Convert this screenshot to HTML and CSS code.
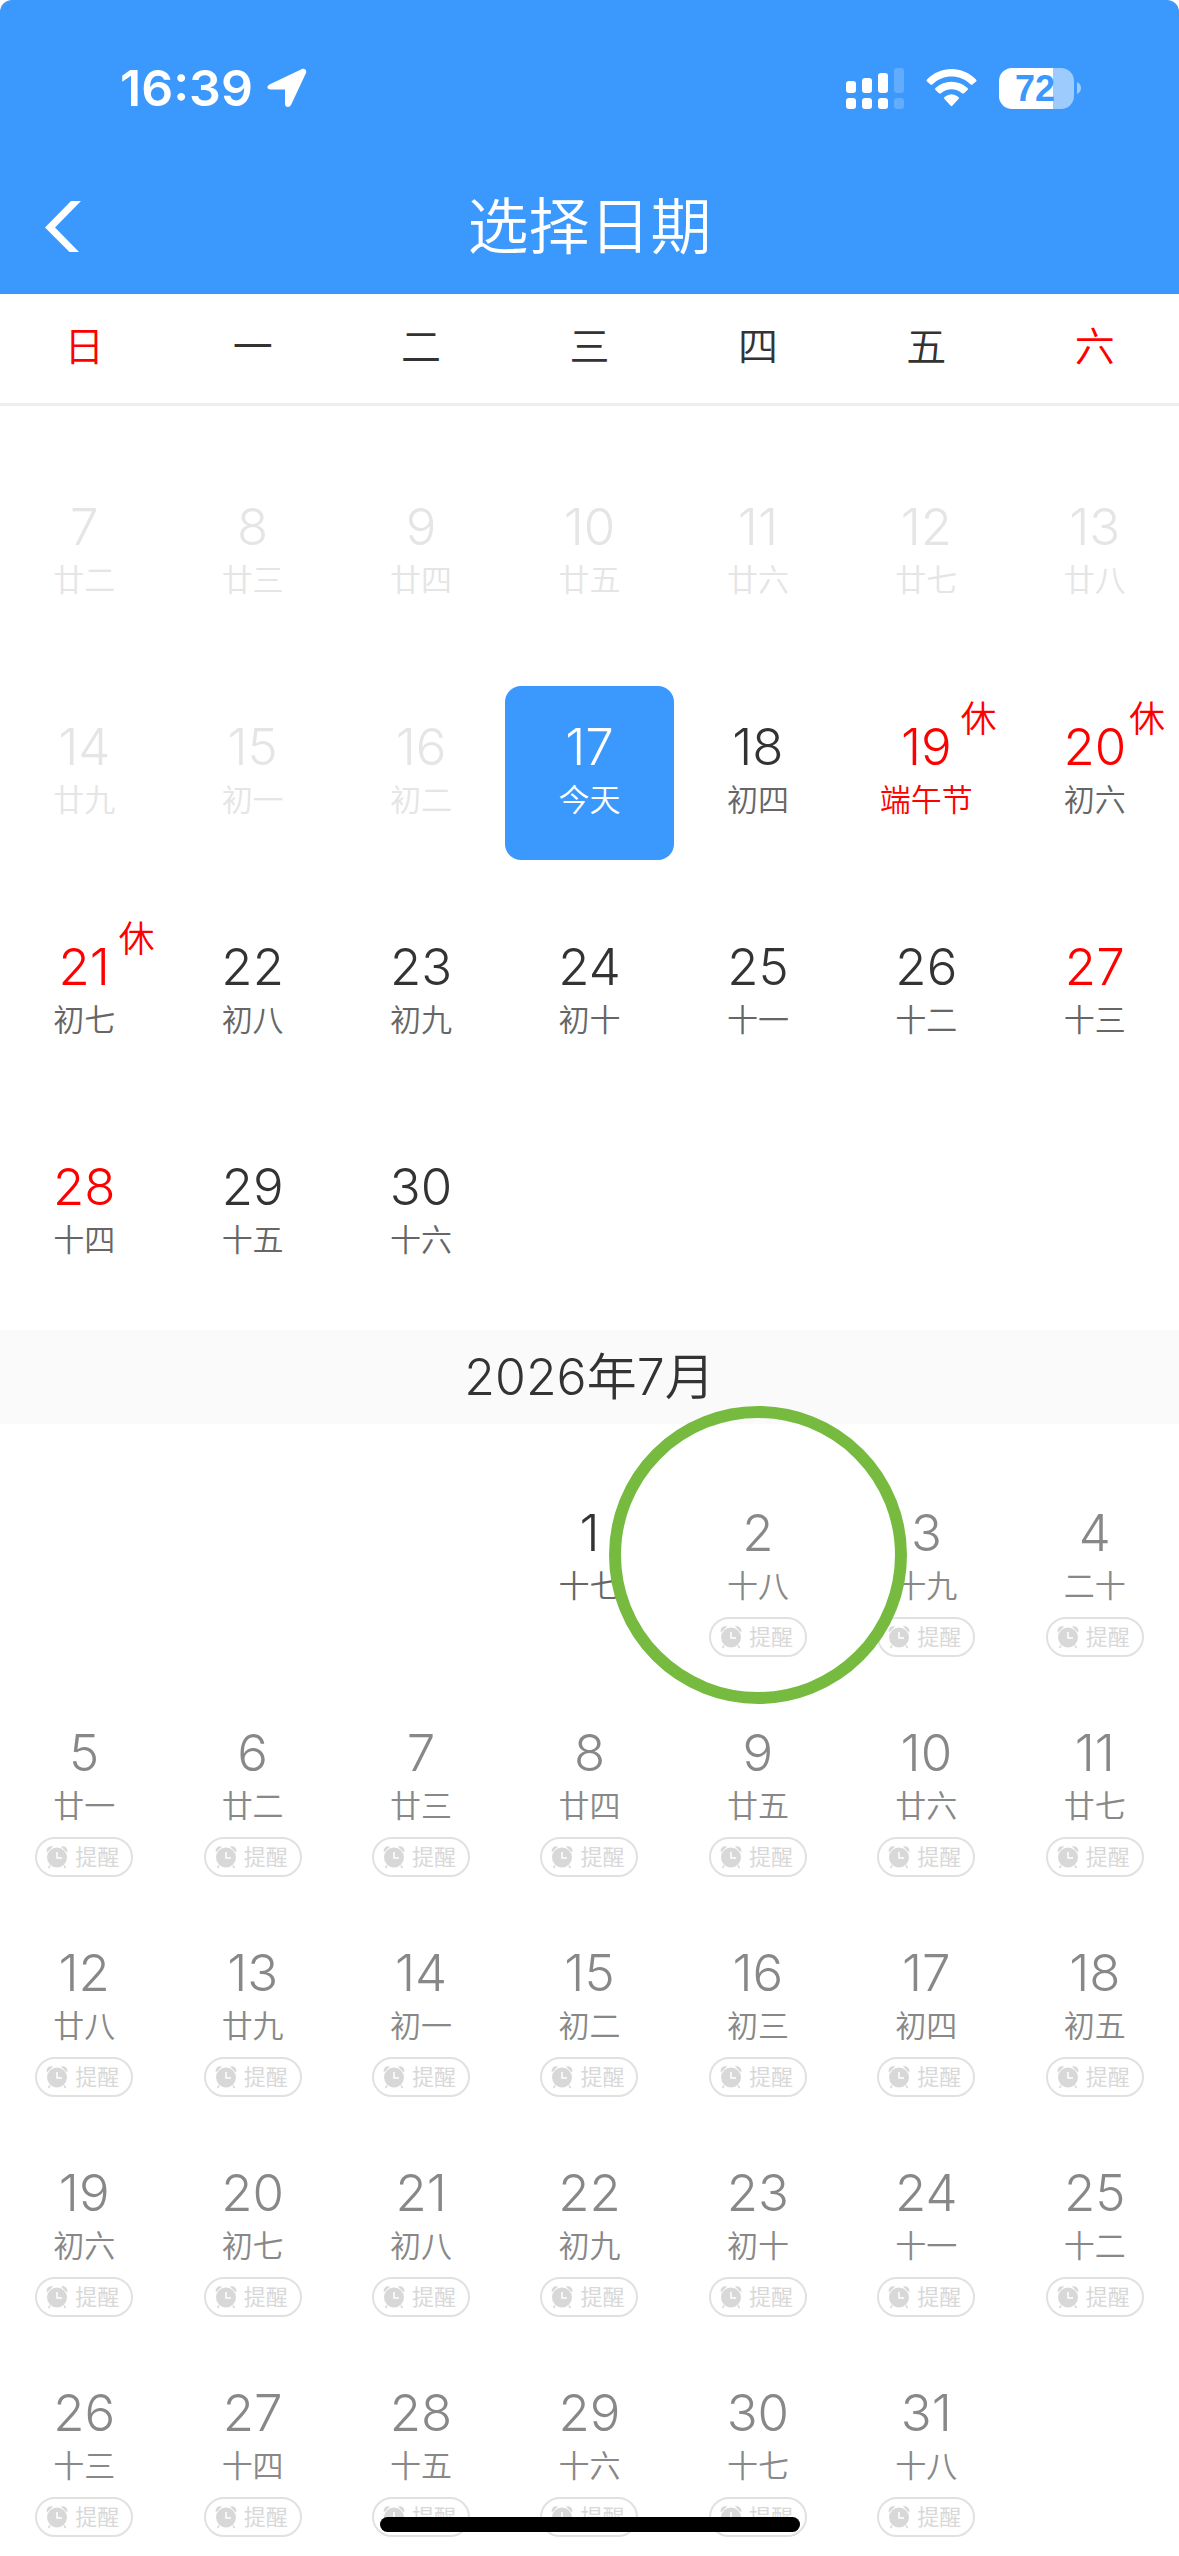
FILE: index.html
```html
<!DOCTYPE html>
<html lang="zh-CN">
<head>
<meta charset="utf-8">
<meta name="viewport" content="width=device-width, initial-scale=1">
<title>选择日期</title>
<link rel="stylesheet" href="styles.css">
</head>
<body>
<svg class="sprite" aria-hidden="true">
  <symbol id="alarm" viewBox="0 0 22 24">
    <path d="M1 7.5C-.5 4 2.500 .5 7 1.500Z M21 7.500C22.500 4 19.500 .5 15 1.500Z"/>
    <path d="M4 20.500L2.500 23M18 20.500L19.500 23" stroke="currentColor" stroke-width="1.500"/>
    <circle cx="11" cy="12.500" r="10"/>
    <path d="M11 7v6h5" fill="none" stroke="#fff" stroke-width="1.500"/>
  </symbol>
</svg>
<header class="top">
  <div class="status">
    <div class="status-left">
      <span class="clock">16:39</span>
      <svg class="locate" viewBox="0 0 40 40" aria-hidden="true"><path d="M3 16.200L34.500 1.200C37.500 0 40 2 39 5L24 37C22.500 40 18 39.500 18 36V21.500H3.500C0 21.500-1 18 3 16.200Z" fill="#fff"/></svg>
    </div>
    <div class="status-right">
      <svg class="signal" viewBox="0 0 58 41" fill="#fff" aria-hidden="true">
        <rect x="0" y="13" width="10" height="12" rx="3"/><rect x="16" y="10" width="10" height="15" rx="3"/><rect x="32" y="5" width="10" height="20" rx="3"/><rect x="48" y="0" width="10" height="25" rx="3" opacity=".2"/>
        <rect x="0" y="30" width="10" height="11" rx="3"/><rect x="16" y="30" width="10" height="11" rx="3"/><rect x="32" y="30" width="10" height="11" rx="3"/><rect x="48" y="30" width="10" height="11" rx="3" opacity=".2"/>
      </svg>
      <svg class="wifi" viewBox="0 0 50 38" fill="#fff" aria-hidden="true">
        <path d="M.5 10.500C14-3.500 36-3.500 49.500 10.500Q50.500 11.500 49.500 12.500L46 15.500Q45 16.200 44 15.300C33 5 17 5 6 15.300Q5 16.200 4 15.500L.5 12.500Q-.5 11.500 .5 10.500Z"/>
        <path d="M9 19C18 10.500 32 10.500 41 19Q42 20 41 21L37.500 24.200Q36.500 25 35.500 24.200C29.500 19 20.500 19 14.500 24.200Q13.500 25 12.500 24.200L9 21Q8 20 9 19Z"/>
        <path d="M18 28Q25 22.500 32 28Q33 29 32 30L25.800 36.800Q25 37.500 24.200 36.800L18 30Q17 29 18 28Z"/>
      </svg>
      <div class="battery"><span class="battery-body">72</span><svg class="battery-tip" viewBox="0 0 4 12" aria-hidden="true"><path d="M0 0Q4 2 4 6T0 12Z" fill="#fff" opacity=".5"/></svg></div>
    </div>
  </div>
  <div class="nav">
    <button class="back" aria-label="返回"><svg viewBox="0 0 36 51" aria-hidden="true"><path d="M26 0H36L10 26.500L34 51H24.500L0 26.500Z" fill="#fff"/></svg></button>
    <h1 class="title">选择日期</h1>
  </div>
</header>
<div class="weekdays">
  <span class="weekend">日</span><span>一</span><span>二</span><span>三</span><span>四</span><span>五</span><span class="weekend">六</span>
</div>
<main id="calendar"></main>
<div class="home"></div>
<script src="calendar.js"></script>
</body>
</html>
```
FILE: styles.css
```css
* { box-sizing: border-box; }
body {
  margin: 0;
  background: #fff;
  color: #333;
  font-family: Inter, "Noto Sans CJK SC", sans-serif;
  font-weight: 350;
}
button {
  border: 0;
  padding: 0;
  background: none;
  color: inherit;
  font: inherit;
}
.sprite { position: absolute; width: 0; height: 0; }

.top {
  background: #3b98fc;
  color: #fff;
  border-radius: 12px 12px 0 0;
}
.status {
  display: flex;
  justify-content: space-between;
  align-items: center;
  height: 176px;
  padding: 0 98px 0 120px;
}
.status-left, .status-right, .battery { display: flex; align-items: center; }
.status-left { gap: 14px; }
.status-right { gap: 22px; }
.clock { font-size: 50px; font-weight: 600; line-height: 60px; }
.locate { width: 40px; height: 40px; }
.signal { width: 58px; height: 41px; }
.wifi { width: 51px; height: 38px; }
.battery { gap: 3px; }
.battery-body {
  width: 75px;
  height: 41px;
  padding-right: 3px;
  border-radius: 13px;
  background: linear-gradient(90deg, #fff 72%, #9dcbfd 72%);
  color: #3b98fc;
  font-family: "Liberation Sans", sans-serif;
  font-size: 36px;
  font-weight: 700;
  line-height: 41px;
  text-align: center;
}
.battery-tip { width: 4px; height: 12px; }
.nav {
  display: grid;
  grid-template-columns: 120px 1fr 120px;
  height: 118px;
}
.back { height: 100px; padding-left: 45px; text-align: left; }
.back svg { display: block; width: 36px; height: 51px; }
.title {
  margin: 0;
  font-size: 61px;
  font-weight: 350;
  line-height: 102px;
  text-align: center;
}

.weekdays {
  display: grid;
  grid-template-columns: repeat(7, 1fr);
  height: 112px;
  border-bottom: 3px solid #eee;
  font-size: 40px;
  line-height: 106px;
  text-align: center;
}
.weekend { color: #f00; }

.days {
  display: grid;
  grid-template-columns: repeat(7, 1fr);
  grid-auto-rows: 185px;
  row-gap: 35px;
  padding: 60px 0 19px;
}
.month-title {
  margin: 0;
  background: #fafafa;
  font-size: 50px;
  font-weight: 350;
  line-height: 94px;
  text-align: center;
}
.month-title + .days { padding-top: 48px; }
.day {
  position: relative;
  display: flex;
  flex-direction: column;
  align-items: center;
  align-self: start;
  min-height: 174px;
  padding-top: 30px;
}
.number { font-size: 51px; line-height: 62px; }
.lunar { color: #666; font-size: 31px; line-height: 44px; }
.past, .past .lunar { color: #e5e5e5; }
.red { color: #f00; }
.festival .lunar { color: #f00; }
.today { border-radius: 16px; background: #3b98fc; }
.today, .today .lunar { color: #fff; }
.closed, .closed .lunar { color: #888; }
.rest {
  position: absolute;
  top: 12px;
  right: 14px;
  color: #f00;
  font-size: 36px;
  line-height: 42px;
}
.remind {
  display: flex;
  align-items: center;
  gap: 7px;
  width: 98px;
  height: 40px;
  margin-top: 9px;
  padding-left: 9px;
  border: 2px solid #e1e1e1;
  border-radius: 20px;
  color: #d8d8d8;
  font-size: 22px;
  font-weight: 400;
  line-height: 36px;
}
.remind svg { width: 22px; height: 24px; fill: currentColor; }
.ring {
  position: absolute;
  z-index: 1;
  top: -66px;
  left: 50%;
  width: 298px;
  height: 298px;
  margin-left: -149px;
  border: 12px solid #76bb40;
  border-radius: 50%;
  pointer-events: none;
}
.home {
  position: fixed;
  z-index: 2;
  bottom: 24px;
  left: 50%;
  width: 420px;
  height: 15px;
  margin-left: -210px;
  border-radius: 8px;
  background: #000;
}
```
FILE: calendar.js
```js
const june = '廿二 廿三 廿四 廿五 廿六 廿七 廿八 廿九 初一 初二 今天 初四 端午节 初六 初七 初八 初九 初十 十一 十二 十三 十四 十五 十六'.split(' ');
const july = '十七 十八 十九 二十 廿一 廿二 廿三 廿四 廿五 廿六 廿七 廿八 廿九 初一 初二 初三 初四 初五 初六 初七 初八 初九 初十 十一 十二 十三 十四 十五 十六 十七 十八'.split(' ');
const restDays = [19, 20, 21];
const redDays = [19, 20, 21, 27, 28];

function day(number, lunar, classes, extra) {
  return `<button class="day ${classes}"><span class="number">${number}</span><span class="lunar">${lunar}</span>${extra}</button>`;
}

const juneDays = june.map((lunar, i) => {
  const n = i + 7;
  const classes = [];
  if (n < 17) classes.push('past');
  if (n === 17) classes.push('today');
  if (redDays.includes(n)) classes.push('red');
  if (n === 19) classes.push('festival');
  return day(n, lunar, classes.join(' '), restDays.includes(n) ? '<span class="rest">休</span>' : '');
}).join('');

const remind = '<span class="remind"><svg aria-hidden="true"><use href="#alarm"/></svg>提醒</span>';
const julyDays = july.map((lunar, i) => {
  const n = i + 1;
  if (n === 1) return day(n, lunar, '', '');
  return day(n, lunar, 'closed', remind + (n === 2 ? '<span class="ring"></span>' : ''));
}).join('');

document.getElementById('calendar').innerHTML =
  `<section class="days">${juneDays}</section>
   <h2 class="month-title">2026年7月</h2>
   <section class="days">${'<span></span>'.repeat(3)}${julyDays}</section>`;
```
